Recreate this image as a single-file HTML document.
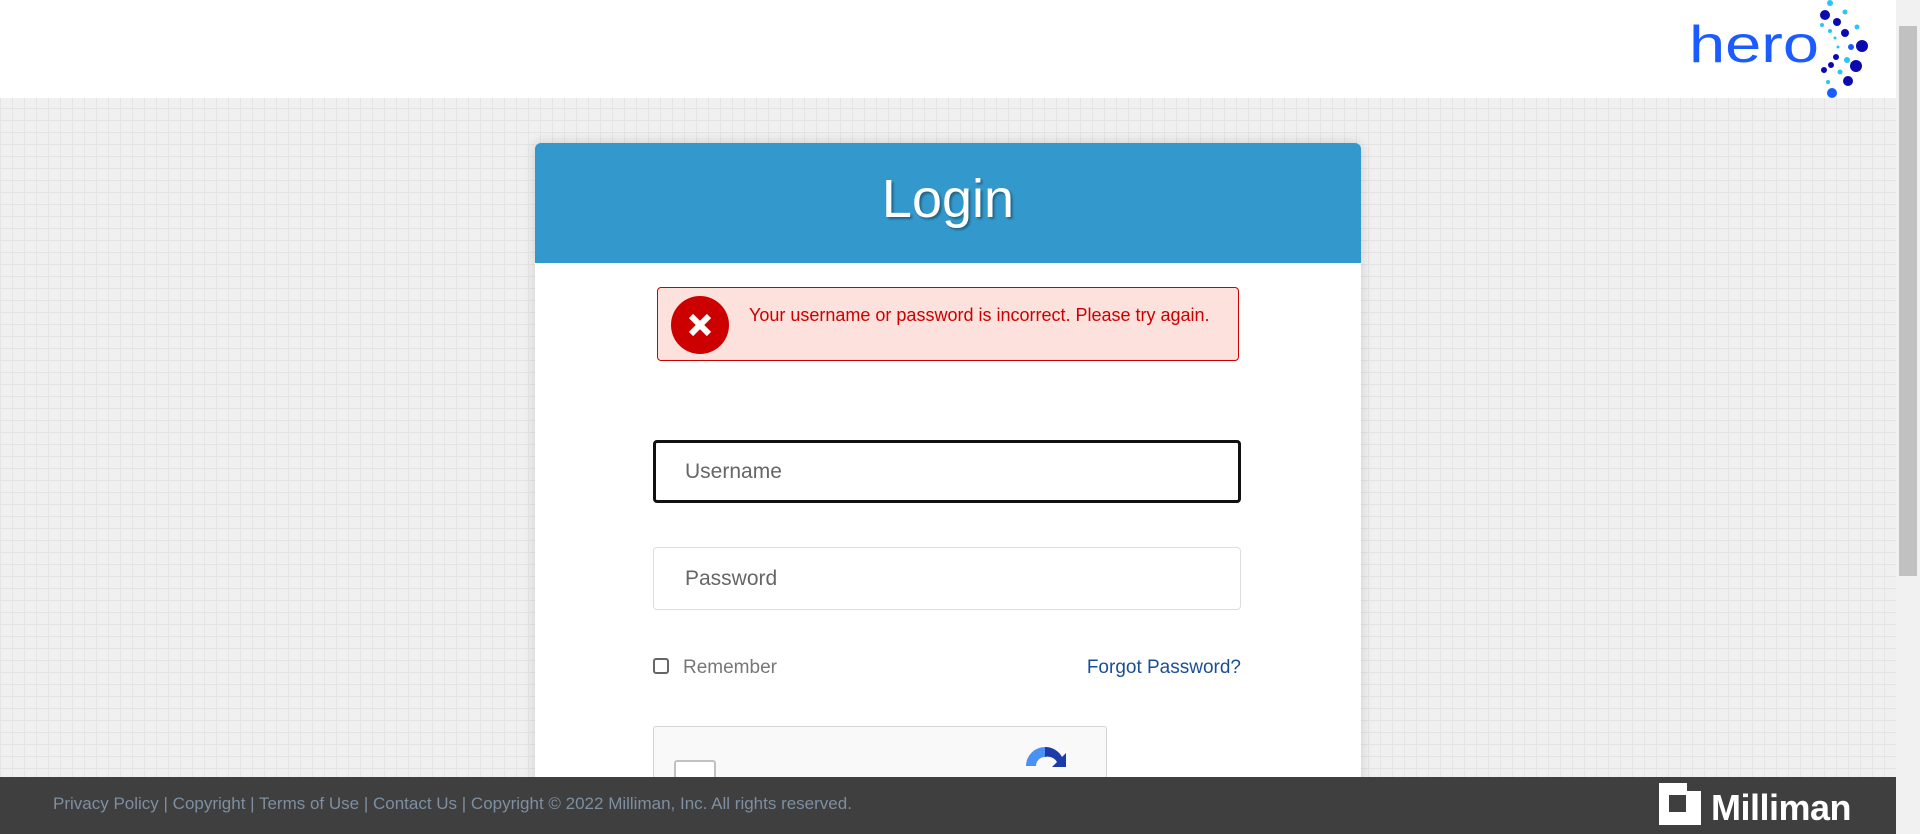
<!DOCTYPE html>
<html><head><meta charset="utf-8"><style>
*{box-sizing:border-box;margin:0;padding:0}
html{overflow:hidden;height:834px}
body{width:1920px;height:834px;overflow:hidden;position:relative;font-family:"Liberation Sans",sans-serif;
background-color:#f0f0f0;background-image:linear-gradient(#e4e4e4 1px,transparent 1px),linear-gradient(90deg,#e4e4e4 1px,transparent 1px);background-size:12px 12px}
.hdr{position:absolute;left:0;top:0;width:1896px;height:98px;background:#fff}
.sb{position:absolute;right:0;top:0;width:24px;height:834px;background:#f1f1f1}
.sb .th{position:absolute;left:3px;top:26px;width:18px;height:550px;background:#c1c1c1}
.card{position:absolute;left:535px;top:143px;width:826px;height:680px;background:#fff;border-radius:6px;box-shadow:0 0 12px rgba(0,0,0,.15);overflow:hidden}
.ch{height:120px;background:#3399cc;color:#fff;text-align:center;font-size:54px;line-height:112px;text-shadow:2px 2px 2px rgba(0,0,0,.35)}
.err{position:absolute;left:122px;top:144px;width:582px;height:74px;background:#fce1dc;border:1px solid #cc0000;border-radius:4px}
.err .ic{position:absolute;left:13px;top:8px;width:58px;height:58px;border-radius:50%;background:#cc0000}
.err .tx{position:absolute;left:91px;top:17px;color:#cc0000;font-size:18px}
.in{position:absolute;left:118px;width:588px;height:63px;border:1px solid #ddd;border-radius:4px;font-size:21px;color:#666;padding-left:31px;line-height:61px}
.u{top:297px;border:3px solid #111;padding-left:29px;line-height:57px}
.p{top:404px}
.rem{position:absolute;left:118px;top:514px;font-size:19px;color:#777}
.rem i{display:inline-block;width:16px;height:16px;border:2px solid #666;border-radius:3px;vertical-align:-1px;margin-right:14px}
.fp{position:absolute;right:120px;top:514px;font-size:19px;color:#1a4f94}
.cap{position:absolute;left:118px;top:583px;width:454px;height:100px;background:#f9f9f9;border:1px solid #d3d3d3;border-radius:3px}
.ft{position:absolute;left:0;top:777px;width:1896px;height:57px;background:#3f3f3f}
.ft .l{position:absolute;left:53px;top:17px;font-size:17px;color:#7d8fa0}
.ft .m{position:absolute;left:1711px;top:10px;font-size:36px;font-weight:bold;color:#fff;letter-spacing:-0.5px}
</style></head><body>
<div class="hdr">
<svg style="position:absolute;left:1680px;top:0" width="200" height="98">
<text x="9" y="62" font-family="Liberation Sans,sans-serif" font-size="52" fill="#1a5cff" textLength="130" lengthAdjust="spacingAndGlyphs">hero</text>
<g transform="translate(-36,0)">
<g fill="#0a0ab0"><circle cx="181" cy="15" r="5"/><circle cx="193" cy="22" r="4"/><circle cx="201" cy="33" r="4"/><circle cx="218" cy="46" r="6"/><circle cx="212" cy="66" r="6"/><circle cx="192" cy="57" r="3"/><circle cx="187" cy="65" r="3"/><circle cx="180" cy="70" r="3"/><circle cx="204" cy="81" r="5"/></g>
<g fill="#29c6f5"><circle cx="186" cy="3" r="3"/><circle cx="201" cy="12" r="2.5"/><circle cx="213" cy="27" r="2.5"/><circle cx="178" cy="25" r="2"/><circle cx="186" cy="31" r="2"/><circle cx="191" cy="38" r="1.5"/><circle cx="194" cy="47" r="1.5"/><circle cx="203" cy="60" r="3"/><circle cx="196" cy="72" r="2.5"/><circle cx="184" cy="82" r="2"/></g>
<circle cx="188" cy="93" r="5" fill="#1a5cff"/><circle cx="207" cy="47" r="3" fill="#1a5cff"/>
</g></svg></div>
<div class="sb"><div class="th"></div></div>
<div class="card">
<div class="ch">Login</div>
<div class="err"><div class="ic"><svg width="58" height="58"><path d="M20 20L38 38M38 20L20 38" stroke="#fff" stroke-width="6"/></svg></div>
<div class="tx">Your username or password is incorrect. Please try again.</div></div>
<div class="in u">Username</div>
<div class="in p">Password</div>
<div class="rem"><i></i>Remember</div>
<div class="fp">Forgot Password?</div>
<div class="cap"><div style="position:absolute;left:20px;top:33px;width:42px;height:42px;border:2px solid #c1c1c1;border-radius:3px;background:#fff"></div>
<svg style="position:absolute;left:368px;top:16px" width="46" height="46"><path d="M23 4A19 19 0 0 0 4 23h10a9 9 0 0 1 9-9z" fill="#4a90f5"/><path d="M23 4A19 19 0 0 1 40 14l4-4v14H30l5-5A11 11 0 0 0 23 14z" fill="#1c3aa9"/></svg></div>
</div>
<div class="ft"><div class="l">Privacy Policy | Copyright | Terms of Use | Contact Us | Copyright © 2022 Milliman, Inc. All rights reserved.</div>
<svg style="position:absolute;left:1659px;top:6px" width="42" height="42"><path d="M0 0h28v8h14v34H0z" fill="#fff"/><rect x="10" y="12" width="17" height="17" fill="#3f3f3f"/></svg>
<div class="m">Milliman</div></div>
</body></html>
